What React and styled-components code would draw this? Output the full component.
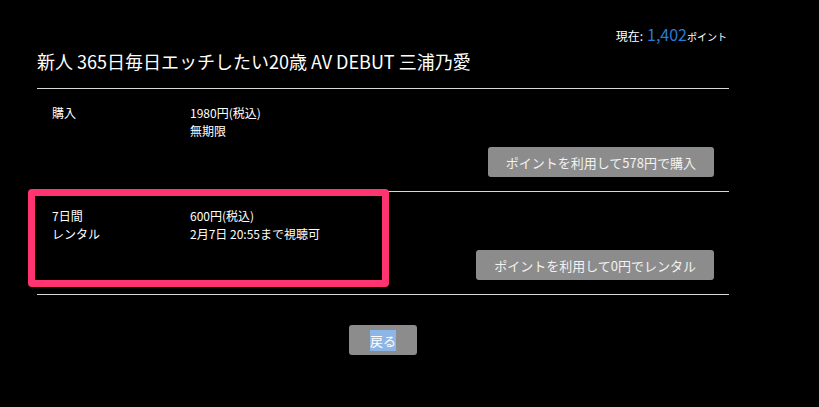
import React from 'react'
import styled, {createGlobalStyle} from 'styled-components'

const GlobalStyle = createGlobalStyle`
    html, body {
        margin: 0;
        padding: 0;
        background: #000;
    }
    body {
        font-family: "Noto Sans CJK JP", "Noto Sans", "Liberation Sans", sans-serif;
        color: #fff;
    }
`

const Wrap = styled.div`
    width: 692px;
    margin-left: 37px;
    padding-top: 24px;
`

const PointLine = styled.div`
    display: flex;
    justify-content: flex-end;
    align-items: baseline;
    height: 20px;
    line-height: 20px;
    font-size: 12px;
    padding-right: 2px;
    margin-bottom: 5px;
`

const PointValue = styled.span`
    color: #2a7ad2;
    font-size: 16px;
    margin-left: 4px;
`

const PointUnit = styled.span`
    font-size: 10px;
`

const Title = styled.h1`
    margin: 0 0 15px;
    font-size: 18px;
    font-weight: normal;
    line-height: 24px;
`

const Plans = styled.div`
    border-top: 1px solid #d8d8d8;
`

const Plan = styled.div`
    position: relative;
    display: flex;
    flex-direction: column;
    padding: 15px 15px 14px;
    border-bottom: 1px solid #d8d8d8;
`

const Info = styled.div`
    display: grid;
    grid-template-columns: 138px 1fr;
    font-size: 12px;
    line-height: 18px;
`

const Lines = styled.div`
    display: flex;
    flex-direction: column;
`

const Action = styled.button`
    align-self: flex-end;
    margin-top: 7px;
    height: 30px;
    padding: 0 ${p => p.$pad}px;
    border: none;
    border-radius: 3px;
    background: #8c8c8c;
    color: #f2f2f2;
    font-family: inherit;
    font-size: 13px;
`

// annotation frame drawn over the rental plan
const Highlight = styled.div`
    position: absolute;
    left: -9px;
    top: -3px;
    width: 361px;
    height: 98px;
    box-sizing: border-box;
    border: 7px solid #ff3470;
    border-radius: 4px;
    pointer-events: none;
`

const Footer = styled.div`
    display: flex;
    justify-content: center;
    margin-top: 30px;
`

const BackButton = styled.button`
    width: 68px;
    height: 30px;
    border: none;
    border-radius: 3px;
    background: #8c8c8c;
    color: #fff;
    font-family: inherit;
    font-size: 13px;
`

const Selected = styled.span`
    background: #8db5e6;
    padding: 1px 0;
`

const plans = [
    {label: ['購入'], detail: ['1980円(税込)', '無期限'], action: 'ポイントを利用して578円で購入', pad: 18},
    {label: ['7日間', 'レンタル'], detail: ['600円(税込)', '2月7日 20:55まで視聴可'], action: 'ポイントを利用して0円でレンタル', pad: 18, marked: true},
]

export default function App(){
    return(
        <Wrap>
            <GlobalStyle/>
            <PointLine>
                現在: <PointValue>1,402</PointValue><PointUnit>ポイント</PointUnit>
            </PointLine>
            <Title>新人 365日毎日エッチしたい20歳 AV DEBUT 三浦乃愛</Title>
            <Plans>
                {
                    plans.map((plan, index) =>
                        <Plan key={'plan'+index}>
                            <Info>
                                <Lines>{plan.label.map(t => <span key={t}>{t}</span>)}</Lines>
                                <Lines>{plan.detail.map(t => <span key={t}>{t}</span>)}</Lines>
                            </Info>
                            <Action $pad={plan.pad}>{plan.action}</Action>
                            {plan.marked && <Highlight/>}
                        </Plan>
                    )
                }
            </Plans>
            <Footer>
                <BackButton><Selected>戻る</Selected></BackButton>
            </Footer>
        </Wrap>
    )
}
